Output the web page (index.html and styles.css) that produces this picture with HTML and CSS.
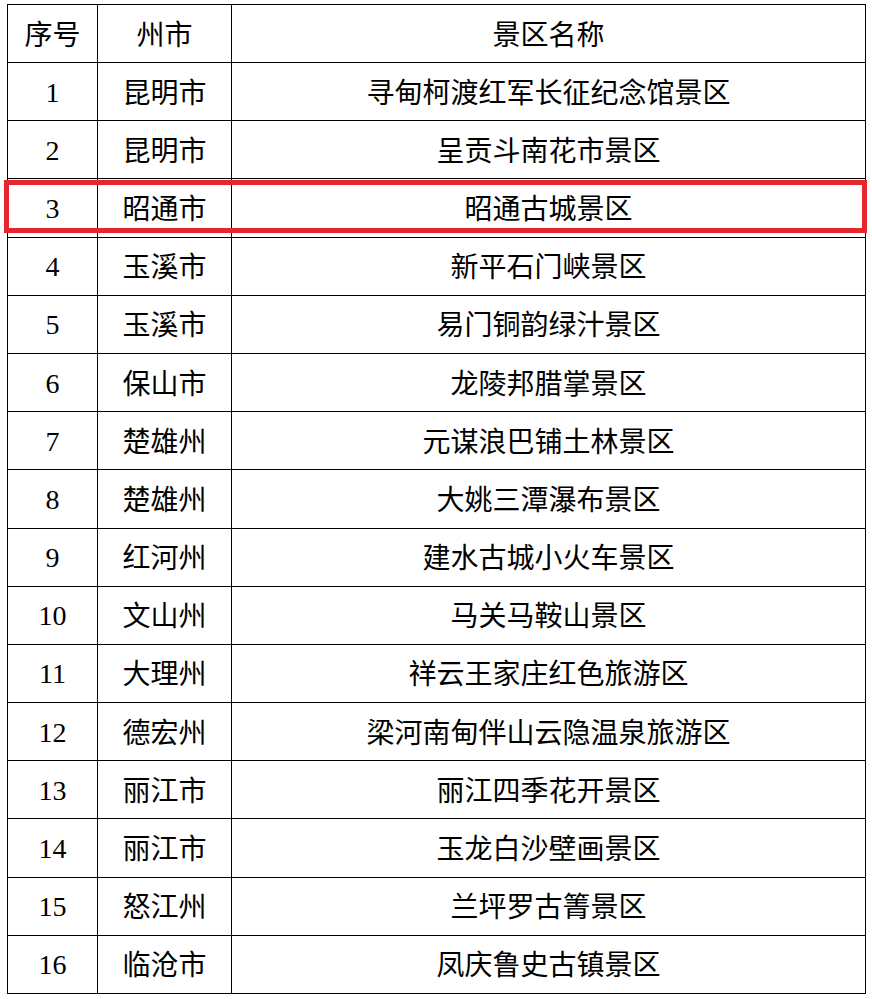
FILE: index.html
```html
<!DOCTYPE html>
<html lang="zh-CN">
<head>
<meta charset="utf-8">
<title>景区名单</title>
<link rel="stylesheet" href="styles.css">
</head>
<body>
<div class="wrap">
<table class="list">
<colgroup><col class="c1"><col class="c2"><col class="c3"></colgroup>
<thead>
<tr><th>序号</th><th>州市</th><th>景区名称</th></tr>
</thead>
<tbody>
<tr><td class="num">1</td><td>昆明市</td><td>寻甸柯渡红军长征纪念馆景区</td></tr>
<tr><td class="num">2</td><td>昆明市</td><td>呈贡斗南花市景区</td></tr>
<tr><td class="num">3</td><td>昭通市</td><td>昭通古城景区</td></tr>
<tr><td class="num">4</td><td>玉溪市</td><td>新平石门峡景区</td></tr>
<tr><td class="num">5</td><td>玉溪市</td><td>易门铜韵绿汁景区</td></tr>
<tr><td class="num">6</td><td>保山市</td><td>龙陵邦腊掌景区</td></tr>
<tr><td class="num">7</td><td>楚雄州</td><td>元谋浪巴铺土林景区</td></tr>
<tr><td class="num">8</td><td>楚雄州</td><td>大姚三潭瀑布景区</td></tr>
<tr><td class="num">9</td><td>红河州</td><td>建水古城小火车景区</td></tr>
<tr><td class="num">10</td><td>文山州</td><td>马关马鞍山景区</td></tr>
<tr><td class="num">11</td><td>大理州</td><td>祥云王家庄红色旅游区</td></tr>
<tr><td class="num">12</td><td>德宏州</td><td>梁河南甸伴山云隐温泉旅游区</td></tr>
<tr><td class="num">13</td><td>丽江市</td><td>丽江四季花开景区</td></tr>
<tr><td class="num">14</td><td>丽江市</td><td>玉龙白沙壁画景区</td></tr>
<tr><td class="num">15</td><td>怒江州</td><td>兰坪罗古箐景区</td></tr>
<tr><td class="num">16</td><td>临沧市</td><td>凤庆鲁史古镇景区</td></tr>
</tbody>
</table>
<div class="highlight"></div>
</div>
</body>
</html>
```
FILE: styles.css
```css
html, body {
  margin: 0;
  padding: 0;
  background: #ffffff;
}
.wrap {
  position: relative;
  padding: 4px 0 0 7px;
}
.list {
  border-collapse: collapse;
  table-layout: fixed;
  width: 859px;
  font-family: "Noto Sans CJK SC", "Noto Sans", sans-serif;
  font-size: 28px;
  color: #000;
}
.c1 { width: 90px; }
.c2 { width: 134px; }
.c3 { width: auto; }
.list th,
.list td {
  border: 1px solid #000;
  padding: 0 0 2px 0;
  text-align: center;
  vertical-align: middle;
  font-weight: normal;
  line-height: 30px;
  height: 55.2px;
}
.list th {
  height: 55px;
}
.list td.num {
  font-family: "Liberation Serif", "Times New Roman", serif;
  font-size: 28px;
  padding: 2px 0 0 0;
}
.highlight {
  position: absolute;
  left: 4px;
  top: 180px;
  width: 853px;
  height: 43px;
  border: 5px solid #e6262e;
}
```
